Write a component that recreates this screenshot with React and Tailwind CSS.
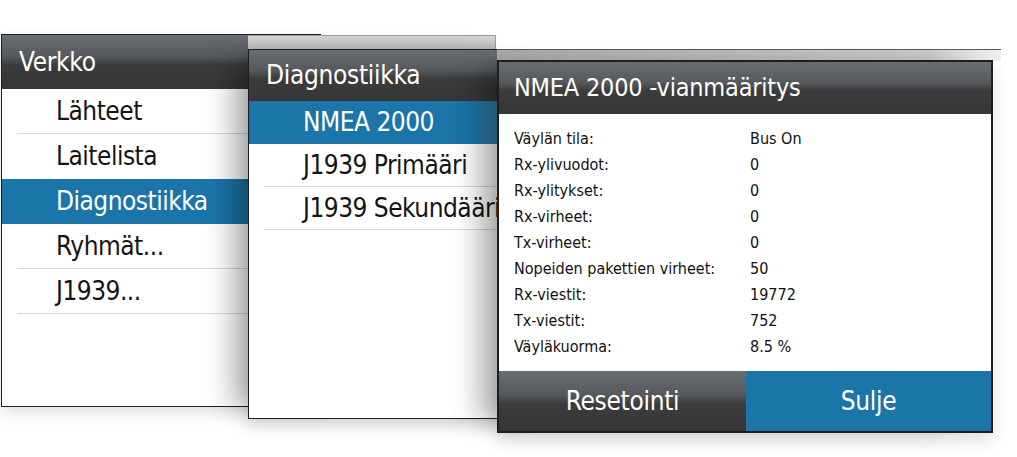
import React from 'react';

const font = { fontFamily: '"Liberation Sans Narrow", "DejaVu Sans Condensed", "Liberation Sans", sans-serif' };

const headerBg = 'bg-[linear-gradient(to_bottom,#6a6e72_0%,#55595d_40%,#3c3c3c_55%,#363636_100%)]';

const MenuRow = ({ label, selected, separator = true, h = 'h-[45px]' }) => (
  <div
    className={`relative flex items-center ${h} pl-[54px] text-[26px] tracking-[-0.5px] whitespace-nowrap ${
      selected ? 'bg-[linear-gradient(to_right,#1b75a8_80%,#5a8fb0_100%)] text-white' : 'text-[#141414]'
    }`}
  >
    {label}
    {separator && !selected && (
      <div className="absolute left-[15px] right-0 bottom-0 h-px bg-[#e2d3d6]" />
    )}
  </div>
);

const Row = ({ label, value }) => (
  <div className="flex items-center h-[26px] text-[16px] text-[#111]">
    <span className="w-[251px] pl-[15px] whitespace-nowrap">{label}</span>
    <span>{value}</span>
  </div>
);

export default function App() {
  const stats = [
    ['Väylän tila:', 'Bus On'],
    ['Rx-ylivuodot:', '0'],
    ['Rx-ylitykset:', '0'],
    ['Rx-virheet:', '0'],
    ['Tx-virheet:', '0'],
    ['Nopeiden pakettien virheet:', '50'],
    ['Rx-viestit:', '19772'],
    ['Tx-viestit:', '752'],
    ['Väyläkuorma:', '8.5 %'],
  ];

  return (
    <div className="relative w-[1017px] h-[457px] overflow-hidden bg-white" style={font}>
      {/* Verkko */}
      <div className="absolute left-[1px] top-[34px] w-[320px] h-[373px] border border-[#1e1e1e] bg-white shadow-[0_6px_14px_rgba(0,0,0,0.12)]">
        <div className={`h-[54px] ${headerBg} flex items-center pl-[17px] text-[26px] tracking-[-0.3px] text-white`}>
          Verkko
        </div>
        <MenuRow label="Lähteet" />
        <MenuRow label="Laitelista" separator={false} />
        <MenuRow label="Diagnostiikka" selected />
        <MenuRow label="Ryhmät..." />
        <MenuRow label="J1939..." />
      </div>

      {/* shadow frame above Diagnostiikka */}
      <div className="absolute left-[248px] top-[35px] w-[248px] h-[15px] border-t border-r border-[#9a9a9a] bg-[linear-gradient(to_bottom,#d6d6d6,#b8b8b8)]" />

      {/* Diagnostiikka */}
      <div className="absolute left-[248px] top-[49px] w-[280px] h-[370px] border border-[#1e1e1e] bg-white shadow-[-28px_0_26px_-12px_rgba(0,0,0,0.3),0_8px_14px_rgba(0,0,0,0.12)]">
        <div className={`h-[51px] ${headerBg} flex items-center pl-[17px] text-[26px] tracking-[-0.3px] text-white`}>
          Diagnostiikka
        </div>
        <MenuRow label="NMEA 2000" selected h="h-[43px]" />
        <MenuRow label="J1939 Primääri" h="h-[43px]" />
        <MenuRow label="J1939 Sekundääri" h="h-[43px]" />
      </div>

      {/* shadow band above the dialog */}
      <div className="absolute left-[497px] top-[49px] w-[504px] h-[12px] border-t border-[#5a5a5a] bg-[#c4c4c4] bg-linear-to-r from-[#a9a9a9] via-[#c9c9c9] via-85% to-[#f0f0f0]" />

      {/* NMEA 2000 -vianmääritys */}
      <div className="absolute left-[497px] top-[60px] w-[496px] h-[373px] border-2 border-[#1e1e1e] bg-white flex flex-col shadow-[-30px_0_26px_-12px_rgba(0,0,0,0.3),0_8px_16px_rgba(0,0,0,0.12)]">
        <div className={`h-[52px] ${headerBg} flex items-center pl-[15px] text-[25px] tracking-[-0.2px] text-white whitespace-nowrap`}>
          NMEA 2000 -vianmääritys
        </div>
        <div className="flex-1 pt-[12px]">
          {stats.map(([l, v]) => (
            <Row key={l} label={l} value={v} />
          ))}
        </div>
        <div className="flex h-[60px]">
          <button className={`w-[247px] ${headerBg} text-white text-[26px] tracking-[-0.3px]`}>Resetointi</button>
          <button className="flex-1 bg-[#1b75a8] text-white text-[26px] tracking-[-0.3px]">Sulje</button>
        </div>
      </div>
    </div>
  );
}
